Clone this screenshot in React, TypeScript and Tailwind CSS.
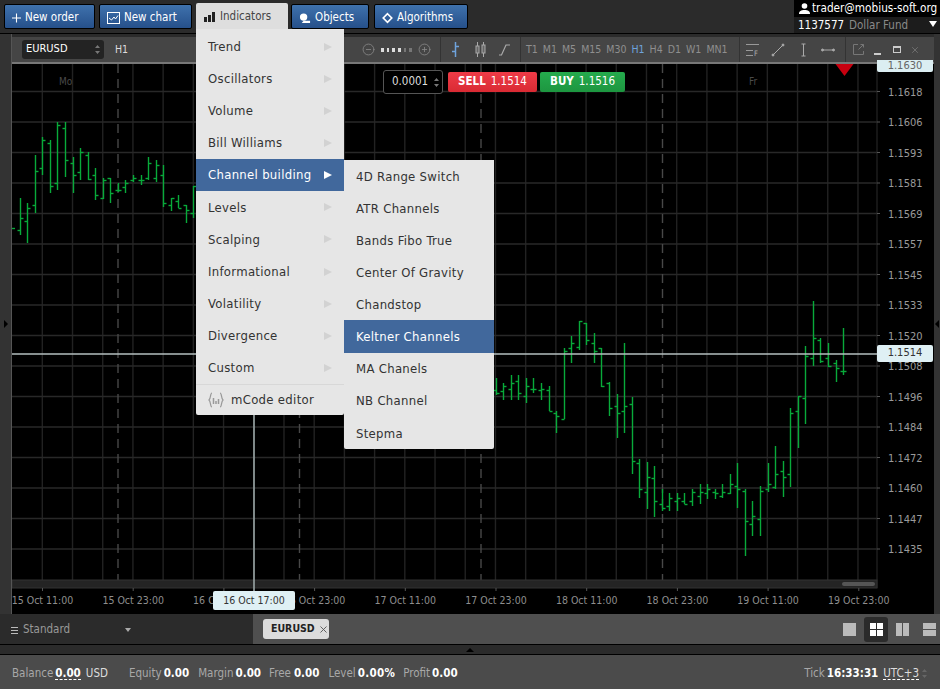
import React from "react";
import { CirclePlus, CircleMinus, X } from "lucide-react";

const FONT = "font-['DejaVu_Sans_Condensed','DejaVu_Sans',sans-serif]";

type B = [number, number, number, number, number];
const left: B[] = [
  [198, 235, 230, 218], [203, 243, 221, 208], [155, 213, 205, 171], [137, 175, 168, 140], [140, 193, 143, 186],
  [122, 190, 183, 125], [122, 177, 128, 160], [157, 193, 163, 175], [148, 180, 172, 152], [152, 180, 155, 179],
  [168, 200, 175, 195], [178, 199, 198, 180], [178, 203, 178, 193], [183, 192, 190, 190], [180, 193, 187, 183],
  [175, 182, 180, 178], [175, 185, 180, 180], [157, 180, 178, 163], [160, 182, 178, 165], [165, 207, 175, 203],
  [198, 211, 205, 198], [195, 208, 201, 208], [205, 223, 205, 210], [186, 218, 213, 186],
];
const right: B[] = [
  [378, 395, 390, 393], [383, 400, 391, 386], [375, 400, 389, 383], [375, 400, 381, 393], [378, 403, 396, 386],
  [378, 393, 389, 389], [383, 400, 390, 389], [386, 411, 390, 411], [411, 433, 413, 416], [348, 419, 419, 351],
  [336, 363, 348, 343], [321, 350, 347, 321], [323, 345, 323, 340], [333, 363, 343, 351], [348, 387, 348, 386],
  [382, 416, 383, 408], [394, 438, 406, 413], [343, 433, 411, 406], [397, 474, 404, 461], [459, 498, 463, 489],
  [462, 509, 492, 477], [466, 517, 478, 501], [489, 511, 504, 508], [493, 511, 506, 498], [493, 511, 501, 498],
  [493, 504, 501, 504], [489, 506, 501, 492], [484, 504, 496, 492], [484, 499, 493, 489], [489, 499, 492, 493],
  [484, 498, 496, 492], [474, 494, 493, 484], [463, 508, 486, 489], [489, 556, 491, 521], [501, 536, 524, 516],
  [486, 536, 519, 491], [463, 492, 489, 484], [446, 489, 487, 474], [461, 497, 471, 477], [408, 487, 474, 413],
  [396, 448, 411, 396], [346, 424, 398, 356], [301, 366, 358, 338], [338, 363, 340, 361], [343, 367, 358, 366],
  [360, 382, 363, 368], [328, 375, 371, 371],
];

function Bar({ i, b }: { i: number; b: B }) {
  const x = Math.round(12.1 + 7.555 * i) + 0.5;
  return (
    <g stroke="#08aa3a" strokeWidth={1.4}>
      <line x1={x} x2={x} y1={b[0]} y2={b[1]} />
      <line x1={x - 3} x2={x} y1={b[2] + 0.5} y2={b[2] + 0.5} />
      <line x1={x} x2={x + 3} y1={b[3] + 0.5} y2={b[3] + 0.5} />
    </g>
  );
}

const prices = ["1.1618", "1.1606", "1.1593", "1.1581", "1.1569", "1.1557", "1.1545", "1.1533", "1.1520", "1.1508", "1.1496", "1.1484", "1.1472", "1.1460", "1.1447", "1.1435"];
const times = ["15 Oct 11:00", "15 Oct 23:00", "16 Oct 11:00", "16 Oct 23:00", "17 Oct 11:00", "17 Oct 23:00", "18 Oct 11:00", "18 Oct 23:00", "19 Oct 11:00", "19 Oct 23:00"];

function Chart() {
  const vs = Array.from({ length: 28 }, (_, k) => 42.3 + 30.21 * k);
  const ds = [118, 299.5, 481, 662.5];
  return (
    <svg viewBox="12 64 922 550" className="w-[922px] h-[550px] block bg-black" style={{ fontFamily: "'DejaVu Sans Condensed','DejaVu Sans',sans-serif" }}>
      {vs.map((x) => (
        <line key={x} x1={x} x2={x} y1={64} y2={580} stroke="#222" strokeWidth={1.4} />
      ))}
      {prices.map((_, k) => (
        <line key={k} x1={12} x2={877} y1={91.5 + 30.5 * k} y2={91.5 + 30.5 * k} stroke="#282828" strokeWidth={1.6} />
      ))}
      {ds.map((x) => (
        <line key={x} x1={x} x2={x} y1={64} y2={580} stroke="#484848" strokeWidth={1.4} strokeDasharray="9 6" />
      ))}
      <text x={59} y={85} fontSize={10} fill="#4a4a4a">Mo</text>
      <text x={749} y={85} fontSize={10} fill="#4a4a4a">Fr</text>
      {left.map((b, i) => <Bar key={i} i={i + 1} b={b} />)}
      {right.map((b, i) => <Bar key={i} i={i + 64} b={b} />)}
      <line x1={12} x2={15} y1={228.5} y2={228.5} stroke="#08aa3a" strokeWidth={1.4} />
      <rect x={12} y={580} width={865} height={8} fill="#242424" stroke="#333" strokeWidth={1} />
      <rect x={842} y={582} width={33} height={4} rx={2} fill="#555" />
      <line x1={877} x2={877} y1={64} y2={588} stroke="#2a2a2a" strokeWidth={1} />
      {prices.map((p, k) => (
        <g key={p}>
          <line x1={877} x2={880} y1={91.5 + 30.5 * k} y2={91.5 + 30.5 * k} stroke="#555" />
          <text x={888} y={95.5 + 30.5 * k} fontSize={11} fill="#9a9a9a">{p}</text>
        </g>
      ))}
      {times.map((t, k) => (
        <g key={t}>
          <line x1={42.5 + 90.7 * k} x2={42.5 + 90.7 * k} y1={588} y2={591} stroke="#555" />
          <text x={42.5 + 90.7 * k} y={604} fontSize={10.5} fill="#8e8e8e" textAnchor="middle">{t}</text>
        </g>
      ))}
      <line x1={12} x2={877} y1={354} y2={354} stroke="#b4bfbf" strokeWidth={1.6} />
      <line x1={254} x2={254} y1={64} y2={592} stroke="#9aa6a6" strokeWidth={1.6} />
      <polygon points="834,62 855,62 844.5,76" fill="#c8000f" />
    </svg>
  );
}

function TopBtn({ label, icon, w, m }: { label: string; icon: React.ReactNode; w: string; m: string }) {
  return (
    <div className={`${w} ${m} mt-[4px] h-[25px] flex items-center gap-[4px] pl-[7px] pt-[2px] rounded-[2px] border border-black bg-gradient-to-b from-[#3f72ad] to-[#26508a] text-[11.5px] text-white`}>
      {icon}
      <span>{label}</span>
    </div>
  );
}

const main = ["Trend", "Oscillators", "Volume", "Bill Williams", "Channel building", "Levels", "Scalping", "Informational", "Volatility", "Divergence", "Custom"];
const sub = ["4D Range Switch", "ATR Channels", "Bands Fibo True", "Center Of Gravity", "Chandstop", "Keltner Channels", "MA Chanels", "NB Channel", "Stepma"];

function Tf({ t, on }: { t: string; on?: boolean }) {
  return <span className={on ? "text-[#6fa3dc]" : "text-[#8f8f8f]"}>{t}</span>;
}

const Sep = () => <div className="w-px h-full shrink-0 bg-[#333]" />;

export default function App() {
  return (
    <div className={`${FONT} relative w-[940px] h-[689px] overflow-hidden bg-[#2b2b2b] flex flex-col`}>
      {/* header */}
      <div className="h-[34px] shrink-0 flex items-start bg-[#2b2b2b] border-b border-black">
        <div className="flex pl-1">
          <TopBtn w="w-[91px]" m="" label="New order" icon={<svg width="9" height="10" viewBox="0 0 10 10" stroke="#fff" strokeWidth="1.2"><path d="M5 0v10M0 5h10" /></svg>} />
          <TopBtn w="w-[93px]" m="ml-[4px]" label="New chart" icon={<svg width="13" height="12" viewBox="0 0 13 12" fill="none" stroke="#fff"><rect x=".5" y=".5" width="12" height="11" /><path d="M2 6l2.500 2L7 5l1.500 2L11 3.500" /></svg>} />
          <div className="ml-[4px] mt-[3px] h-[26px] w-[92px] flex items-center gap-[5px] pl-[8px] pt-[2px] rounded-t-[2px] bg-[#dedede] text-[11.5px] text-[#444]">
            <svg width="11" height="10" viewBox="0 0 11 10" fill="#222"><rect x="0" y="5" width="3" height="5" /><rect x="4" y="3" width="3" height="7" /><rect x="8" y="0" width="3" height="10" /></svg>
            <span>Indicators</span>
          </div>
          <TopBtn w="w-[78px]" m="ml-[3px]" label="Objects" icon={<svg width="12" height="12" viewBox="0 0 13 12" fill="#fff"><circle cx="5" cy="5" r="4" /><path d="M5 9h7v2.500H3z" /></svg>} />
          <TopBtn w="w-[94px]" m="ml-[5px]" label="Algorithms" icon={<svg width="11" height="12" viewBox="0 0 13 13" fill="none" stroke="#fff" strokeWidth="2"><path d="M6.500 1.500l5 5-5 5-5-5z" /></svg>} />
        </div>
        <div className="ml-auto w-[146px] h-[33px] bg-black text-white">
          <div className="h-[17px] flex items-center gap-[2px] pl-[5px] text-[11.7px] whitespace-nowrap">
            <svg className="shrink-0" width="11" height="11" viewBox="0 0 11 11" fill="#fff"><circle cx="5.500" cy="3" r="2.800" /><path d="M0 11c0-3 2-4 5.500-4S11 8 11 11z" /></svg>
            <span>trader@mobius-soft.org</span>
          </div>
          <div className="h-[16px] flex items-center pl-1 pt-[1px] bg-[#1c1c1c] text-[11.5px] relative">
            <span>1137577</span>
            <span className="ml-[5px] text-[#8a8a8a]">Dollar Fund</span>
            <span className="absolute right-[3px] top-[4px] w-0 h-0 border-x-[4px] border-x-transparent border-t-[6px] border-t-white" />
          </div>
        </div>
      </div>

      {/* middle */}
      <div className="flex-1 flex min-h-0">
        <div className="w-3 bg-[#333] flex items-center justify-center border-r border-[#555]">
          <span className="w-0 h-0 border-y-[4px] border-y-transparent border-l-[4px] border-l-black" />
        </div>
        <div className="w-[922px] flex flex-col">
          <div className="h-[30px] pt-[3px] bg-[#2b2b2b] shrink-0">
            <div className="h-[27px] bg-[#454545] border-b-2 border-[#777] flex items-center relative text-[10.5px]">
              <div className="ml-[10px] w-[82px] h-[19px] rounded-[3px] bg-[#232323] text-white text-[11px] flex items-center pl-1">
                EURUSD
                <svg className="ml-auto mr-1" width="5" height="11" viewBox="0 0 5 11" fill="#777"><path d="M2.500 1L5 4H0zM2.500 10L0 7h5z" /></svg>
              </div>
              <span className="ml-[11px] w-[247px] text-[#ddd]">H1</span>
              <div className="w-[78px] flex items-center gap-[6px] h-full">
                <CircleMinus size={13} color="#888" strokeWidth={1.5} />
                <span className="flex gap-[3px] w-[31px]">
                  {[1, 1, 1, 1, 0, 0].map((o, i) => <i key={i} className={`w-[3px] h-[4px] ${o ? "bg-[#ddd]" : "bg-[#777]"}`} />)}
                </span>
                <CirclePlus size={13} color="#888" strokeWidth={1.5} />
              </div>
              <Sep />
              <div className="flex items-center pl-[10px] w-[79px] h-full">
                <svg width="9" height="15" viewBox="0 0 9 15" stroke="#6fa3dc" strokeWidth="1.5"><path d="M4.500 0v15M1 9.500h3.500M4.500 4.500H8" /></svg>
                <svg className="ml-[15px]" width="11" height="15" viewBox="0 0 11 15" stroke="#aaa" fill="#666"><path d="M2.500 0v15M8.500 0v15" /><rect x="1" y="4" width="3" height="7" /><rect x="7" y="3" width="3" height="8" /></svg>
                <svg className="ml-[12px]" width="13" height="13" viewBox="0 0 13 13" fill="none" stroke="#aaa" strokeWidth="1.2"><path d="M1 12h2.500L8 2h4" /></svg>
              </div>
              <Sep />
              <div className="flex items-center gap-[5px] pl-[5px] w-[218px] h-full">
                <Tf t="T1" /><Tf t="M1" /><Tf t="M5" /><Tf t="M15" /><Tf t="M30" /><Tf t="H1" on /><Tf t="H4" /><Tf t="D1" /><Tf t="W1" /><Tf t="MN1" />
              </div>
              <Sep />
              <div className="flex items-center pl-[6px] w-[105px] h-full">
                <svg width="14" height="14" viewBox="0 0 14 14" fill="none" stroke="#999"><path d="M0 1.500h13M0 7.500h7M0 12.500h7" /><text x="8" y="13" fontSize="7.5" fill="#aaa" stroke="none">F</text></svg>
                <svg className="ml-[11px]" width="14" height="14" viewBox="0 0 14 14" fill="#aaa" stroke="#aaa"><path d="M2 12L12 2" /><circle cx="2" cy="12" r="1" /><circle cx="12" cy="2" r="1" /></svg>
                <svg className="ml-[14px]" width="9" height="14" viewBox="0 0 9 14" fill="#aaa" stroke="#aaa"><path d="M4.500 1v12M2.500 1h4M2.500 13h4" /></svg>
                <svg className="ml-[13px]" width="14" height="6" viewBox="0 0 14 6" fill="#aaa" stroke="#aaa"><path d="M1 3h12" /><circle cx="1.500" cy="3" r="1" /><circle cx="12.500" cy="3" r="1" /></svg>
              </div>
              <Sep />
              <div className="flex items-center pl-[7px] h-full text-[#bbb]">
                <svg width="11" height="11" viewBox="0 0 11 11" fill="none" stroke="#777"><path d="M5 .5H.5v10h10V7M5.500 5.500l5-5M7.500.5h3v3" /></svg>
                <span className="ml-[10px] w-[7px] h-[2px] mt-2 bg-[#ccc]" />
                <span className="ml-[12px] w-[8px] h-[7px] border border-[#ccc] border-t-2" />
                <X className="ml-[9px]" size={10} color="#777" />
              </div>
            </div>
          </div>
          <div className="relative h-[550px]">
            <Chart />
            {/* overlays on the chart */}
            <div className="absolute left-[371px] top-[6px] flex items-center">
              <div className="w-[60px] h-[24px] rounded-[3px] border border-[#555] bg-black text-[#ddd] text-[11.5px] flex items-center pl-[8px]">
                0.0001
                <svg className="ml-auto mr-[3px]" width="5" height="11" viewBox="0 0 5 11" fill="#777"><path d="M2.500 1L5 4H0zM2.500 10L0 7h5z" /></svg>
              </div>
              <div className="ml-[5px] w-[89px] h-[20px] rounded-[2px] bg-gradient-to-b from-[#ef3b47] to-[#d92a33] text-white text-[11.5px] flex items-center justify-center gap-[5px]">
                <b>SELL</b><span>1.1514</span>
              </div>
              <div className="ml-[3px] w-[85px] h-[20px] rounded-[2px] bg-gradient-to-b from-[#25ab4d] to-[#1d9640] text-white text-[11.5px] flex items-center justify-center gap-[5px]">
                <b>BUY</b><span>1.1516</span>
              </div>
            </div>
            <div className="absolute left-[865px] top-[-4px] w-[56px] h-[12px] bg-[#dbeef2] rounded-b-[2px] text-[11px] text-[#666] flex items-center justify-center overflow-hidden">1.1630</div>
            <div className="absolute left-[865px] top-[281px] w-[56px] h-[17px] bg-[#dff0f4] rounded-[2px] text-[11px] text-[#333] flex items-center justify-center">1.1514</div>
            <div className="absolute left-[201px] top-[527px] w-[82px] h-[19px] bg-[#dff0f4] rounded-[2px] text-[10.5px] text-[#333] flex items-center justify-center">16 Oct 17:00</div>
          </div>
        </div>
        <div className="w-[6px] bg-[#333] flex items-center justify-center">
          <span className="w-0 h-0 border-y-[4px] border-y-transparent border-r-[4px] border-r-black" />
        </div>
      </div>

      {/* tab row */}
      <div className="h-[31px] shrink-0 flex border-b border-black">
        <div className="w-[253px] bg-[#2b2b2b] flex items-center pl-[11px] pt-[2px] text-[11.5px] text-[#999]">
          <span className="flex flex-col gap-[2px] w-[7px]">
            <i className="h-px bg-[#bbb]" /><i className="h-px bg-[#bbb]" /><i className="h-px bg-[#bbb]" />
          </span>
          <span className="ml-[5px]">Standard</span>
          <span className="ml-[55px] w-0 h-0 border-x-[3.5px] border-x-transparent border-t-[4px] border-t-[#aaa]" />
        </div>
        <div className="flex-1 bg-[#4f4f4f] flex items-center pl-[10px] pr-[4px]">
          <div className="h-[20px] w-[66px] rounded-[3px] bg-[#dcdcdc] flex items-center pl-2 gap-[3px] text-[10.5px] font-semibold text-[#222]">
            EURUSD <X size={11} color="#555" />
          </div>
          <div className="ml-auto flex items-center">
            <span className="w-[13px] h-[13px] bg-[#bbb]" />
            <div className="ml-[8px] w-[24px] h-[25px] rounded-[3px] bg-[#2b2b2b] grid grid-cols-2 gap-[1px] px-[5.500px] py-[6px]">
              <i className="bg-white" /><i className="bg-white" /><i className="bg-white" /><i className="bg-white" />
            </div>
            <div className="ml-[8px] flex gap-[1px]"><span className="w-[6px] h-[13px] bg-[#bbb]" /><span className="w-[6px] h-[13px] bg-[#bbb]" /></div>
            <div className="ml-[14px] flex flex-col gap-[1px]"><span className="w-[13px] h-[6px] bg-[#bbb]" /><span className="w-[13px] h-[6px] bg-[#bbb]" /></div>
          </div>
        </div>
      </div>
      <div className="h-[10px] shrink-0 bg-[#2b2b2b] flex justify-center border-b border-black">
        <span className="mt-[3px] w-0 h-0 border-x-[4px] border-x-transparent border-b-[4px] border-b-black" />
      </div>

      {/* status */}
      <div className="h-[34px] shrink-0 bg-[#4b4b4b] flex items-center pl-3 pr-[13px] pt-[3px] text-[11.5px] text-[#a8a8a8]">
        <span>Balance</span>
        <b className="ml-[2px] text-white border-b border-dashed border-white leading-[12px]">0.00</b>
        <span className="ml-[5px] text-[#ddd]">USD</span>
        <span className="ml-[21px]">Equity</span><b className="ml-[2px] text-white">0.00</b>
        <span className="ml-[9px]">Margin</span><b className="ml-[2px] text-white">0.00</b>
        <span className="ml-[8px]">Free</span><b className="ml-[3px] text-white">0.00</b>
        <span className="ml-[9px]">Level</span><b className="ml-[2px] text-white tracking-[0.3px]">0.00%</b>
        <span className="ml-[8px]">Profit</span><b className="ml-[2px] text-white">0.00</b>
        <span className="ml-auto">Tick</span><b className="ml-[2px] text-white">16:33:31</b>
        <span className="ml-[5px] text-[#ddd] border-b border-dashed border-white leading-[12px]">UTC+3</span>
        <svg className="ml-[3px]" width="5" height="11" viewBox="0 0 5 11" fill="#666"><path d="M2.500 1L5 4H0zM2.500 10L0 7h5z" /></svg>
      </div>

      {/* open dropdown */}
      <div className="absolute left-[196px] top-[29px] w-[148px] h-[386px] pt-[1px] bg-[#e6e6e6] rounded-b-[2px] text-[13px] tracking-[0.3px] text-[#333] flex flex-col">
        {main.map((m) => {
          const on = m === "Channel building";
          return (
            <div key={m} className={`h-[32.15px] shrink-0 flex items-center pl-3 pr-3 pt-[1px] ${on ? "bg-[#41689c] text-white" : ""}`}>
              <span>{m}</span>
              <span className={`ml-auto w-0 h-0 border-y-[4px] border-y-transparent border-l-[8px] ${on ? "border-l-white" : "border-l-[#d2d2d2]"}`} />
            </div>
          );
        })}
        <div className="border-t border-[#d8d8d8] flex-1 flex items-center pl-3 gap-[7px]">
          <svg width="16" height="16" viewBox="0 0 16 16" fill="none" stroke="#999" strokeWidth="1.2"><path d="M4 1C2 1 3 6.500 1 8c2 1.500 1 7 3 7M12 1c2 0 1 5.500 3 7-2 1.500-1 7-3 7" /><path d="M5.500 6v6M8 9v3M10.500 7v5" strokeWidth="1.500" /></svg>
          <span>mCode editor</span>
        </div>
        <div className="absolute left-[148px] top-[131px] w-[150px] h-[289px] bg-[#e6e6e6] rounded-b-[2px] flex flex-col">
          {sub.map((s) => (
            <div key={s} className={`h-[32.1px] shrink-0 flex items-center pl-3 pt-[1px] ${s === "Keltner Channels" ? "bg-[#41689c] text-white" : ""}`}>{s}</div>
          ))}
        </div>
      </div>
    </div>
  );
}
